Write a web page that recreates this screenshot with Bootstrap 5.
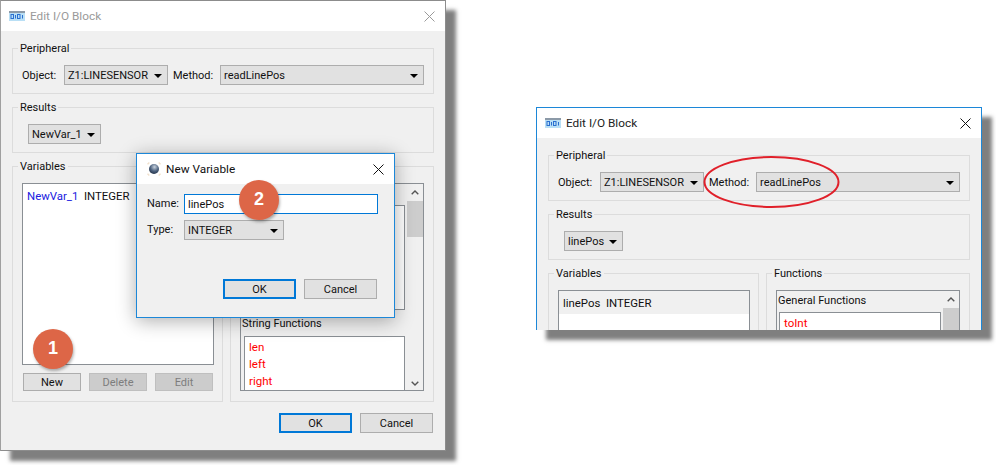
<!doctype html>
<html lang="en">
<head>
<meta charset="utf-8">
<title>Edit I/O Block</title>
<link href="https://cdn.jsdelivr.net/npm/bootstrap@5.3.0/dist/css/bootstrap.min.css" rel="stylesheet">
<style>
html,body{margin:0;background:#fff}
body{font-family:Roboto,"Noto Sans",sans-serif;font-size:11px;line-height:14px;color:#111}
.stage{position:relative;width:996px;height:465px;overflow:hidden}
.win{position:absolute;background:#f0f0f0;box-shadow:10px 10px 4px #7f7f7f;overflow:hidden}
.win-a{left:0;top:0;width:446px;height:451px;border:1px solid #8c8c8c;border-left-color:#a0a0a0}
.win-b{left:536px;top:107px;width:446px;height:223px;border:1px solid #1c87d8;border-bottom:0}
.tbar{height:30px;background:#fff;padding-left:8px;padding-right:10px;font-size:11.8px}
.win-a .tbar-text{color:#9a9a9a}
.tbar-text{margin-left:5px;color:#222}
.x-ico{display:block}
.wbody{padding:10px 11px 0 11px}
.gb{border:1px solid #dcdcdc;padding:0 9px;min-width:0;margin:0 0 6px}
.gb-title{float:none;width:auto;font-size:11px;line-height:12px;margin:0 0 0 -4px;padding:2px 2px 0;color:#111}
.gb-top{padding-top:10px;padding-bottom:8px}
.pick{height:20px;background:#e1e1e1;border:1px solid #adadad;padding:1px 5px 0 3px;line-height:17px;white-space:nowrap}
.pick::after{content:"";border-style:solid;border-width:4px 4px 0;border-color:#000 transparent transparent;margin-left:auto;flex:none}
.lbl{height:20px;line-height:21px;white-space:nowrap}
.lbl-obj{width:42px}
.lbl-met{width:47px;margin-left:5px}
.w-obj{width:104px}
.w-met{width:204px}
.w-res{width:73px;margin-left:6px}
.w-res-b{width:59px}
.fcols{gap:7px}
.gb-v{width:211px;padding:10px 8px 10px 9px;margin-bottom:0}
.gb-f{width:204px;padding:10px 9px 10px;margin-bottom:0}
.vlist{height:182px;background:#fff;border:1px solid #8a8f94}
.vrow{height:23px;padding:5px 4px;white-space:pre;font-size:11.4px}
.win-b .vrow{background:#f0f0f0}
.vname{color:#2020e0}
.win-b .vname{color:#111}
.btn.win-btn{width:58px;height:18px;padding:0;border-radius:0;background:#e1e1e1;border:1px solid #adadad;font-size:11px;line-height:15px;color:#111;opacity:1}
.btn.win-btn:disabled{background:#ccc;border-color:#bfbfbf;color:#7d7d7d;opacity:1}
.vbtns{margin:8px 1px 0;justify-content:space-between}
.fbox{height:208px;border:1px solid #8a8f94;background:#f0f0f0}
.fmain{width:166px;padding:0 2px;overflow:hidden;flex:none}
.fhead{height:21px;padding-top:3px;white-space:nowrap;margin-left:-1px}
.flist{background:#fff;border:1px solid #8a8f94;padding:2px 4px;color:#f00;font-size:11.5px;line-height:17px}
.fl1{height:105px}
.fl2{height:60px;margin-left:1px}
.fgap{height:26px;padding-top:7px;white-space:nowrap;margin-left:-1px}
.sbar{width:16px;flex:none;position:relative}
.sthumb{height:36px;background:#cdcdcd;margin-top:17px}
.schev{display:block;position:absolute;left:4px}
.schev-u{top:6px}
.schev-d{bottom:4px}
.foot{margin-top:11px;padding-right:1px;gap:8px}
.btn.btn-lg-w{width:73px;height:20px;line-height:17px}
.btn.btn-def{border:2px solid #0078d7;line-height:15px}
.dlg{position:absolute;left:136px;top:153px;width:259px;height:165px;background:#f0f0f0;border:1px solid #1c87d8;box-shadow:0 3px 18px rgba(0,0,0,.32)}
.dlg .tbar{padding-left:10px;height:30px}
.dlg .tbar-text{color:#111;margin-left:5px}
.dbody{padding:10px 16px 18px 10px;height:133px}
.row-name{margin-bottom:6px}
.dlbl{width:37px;line-height:20px}
.dinput{width:194px;height:20px;border:1px solid #0078d7;background:#fff;padding:1px 3px 0;line-height:17px}
.w-typ{width:100px}
.mark-num{position:absolute;width:40px;height:40px;border-radius:50%;background:#dd6647;color:#fff;font-weight:700;font-size:18px;line-height:38px;text-align:center;font-family:"Liberation Sans",sans-serif;box-shadow:1px 2px 3px rgba(0,0,0,.3)}
.m1{left:33px;top:329px}
.m2{left:239px;top:180px}
.ring{position:absolute;left:703px;top:155px}
</style>
</head>
<body>
<div class="stage">

<div class="win win-a">
  <div class="tbar d-flex align-items-center">
    <svg width="16" height="10" viewBox="0 0 16 10"><rect width="16" height="10" fill="#b9dff5"/><rect width="16" height="2" fill="#8c9aa8"/><rect x="2" y="3.5" width="2.5" height="4" fill="none" stroke="#2a6fd0"/><rect x="6" y="4" width="1" height="3.5" fill="#2a6fd0"/><rect x="8.5" y="3.5" width="2.5" height="4" fill="none" stroke="#2a6fd0"/><rect x="13" y="4" width="1" height="3.5" fill="#2a6fd0"/></svg>
    <span class="tbar-text">Edit I/O Block</span>
    <svg class="x-ico ms-auto" width="11" height="11" viewBox="0 0 11 11"><path d="M.5.5l10 10M10.5.5l-10 10" stroke="#9a9a9a" fill="none"/></svg>
  </div>
  <div class="wbody">
    <fieldset class="gb">
      <legend class="gb-title">Peripheral</legend>
      <div class="d-flex gb-top">
        <span class="lbl lbl-obj">Object:</span>
        <div class="pick d-flex align-items-center w-obj">Z1:LINESENSOR</div>
        <span class="lbl lbl-met">Method:</span>
        <div class="pick d-flex align-items-center w-met">readLinePos</div>
      </div>
    </fieldset>
    <fieldset class="gb">
      <legend class="gb-title">Results</legend>
      <div class="d-flex gb-top">
        <div class="pick d-flex align-items-center w-res">NewVar_1</div>
      </div>
    </fieldset>
    <div class="d-flex fcols">
      <fieldset class="gb gb-v">
        <legend class="gb-title">Variables</legend>
        <div class="vlist mt-0"><div class="vrow"><span class="vname">NewVar_1</span>  INTEGER</div></div>
        <div class="d-flex vbtns">
          <button class="btn win-btn">New</button>
          <button class="btn win-btn" disabled>Delete</button>
          <button class="btn win-btn" disabled>Edit</button>
        </div>
      </fieldset>
      <fieldset class="gb gb-f">
        <legend class="gb-title">Functions</legend>
        <div class="fbox d-flex">
          <div class="fmain">
            <div class="fhead">General Functions</div>
            <div class="flist fl1">toInt<br>toFloat<br>toStr</div>
            <div class="fgap">String Functions</div>
            <div class="flist fl2">len<br>left<br>right</div>
          </div>
          <div class="sbar">
            <svg class="schev schev-u" width="8" height="5" viewBox="0 0 8 5"><path d="M.7 4.3L4 1l3.3 3.3" fill="none" stroke="#555" stroke-width="1.4"/></svg>
            <div class="sthumb"></div>
            <svg class="schev schev-d" width="8" height="5" viewBox="0 0 8 5"><path d="M.7.7L4 4 7.3.7" fill="none" stroke="#555" stroke-width="1.4"/></svg>
          </div>
        </div>
      </fieldset>
    </div>
    <div class="d-flex justify-content-end foot">
      <button class="btn win-btn btn-lg-w btn-def">OK</button>
      <button class="btn win-btn btn-lg-w">Cancel</button>
    </div>
  </div>
</div>

<div class="win win-b">
  <div class="tbar d-flex align-items-center">
    <svg width="16" height="10" viewBox="0 0 16 10"><rect width="16" height="10" fill="#b9dff5"/><rect width="16" height="2" fill="#8c9aa8"/><rect x="2" y="3.5" width="2.5" height="4" fill="none" stroke="#2a6fd0"/><rect x="6" y="4" width="1" height="3.5" fill="#2a6fd0"/><rect x="8.5" y="3.5" width="2.5" height="4" fill="none" stroke="#2a6fd0"/><rect x="13" y="4" width="1" height="3.5" fill="#2a6fd0"/></svg>
    <span class="tbar-text">Edit I/O Block</span>
    <svg class="x-ico ms-auto" width="11" height="11" viewBox="0 0 11 11"><path d="M.5.5l10 10M10.5.5l-10 10" stroke="#111" fill="none"/></svg>
  </div>
  <div class="wbody">
    <fieldset class="gb">
      <legend class="gb-title">Peripheral</legend>
      <div class="d-flex gb-top">
        <span class="lbl lbl-obj">Object:</span>
        <div class="pick d-flex align-items-center w-obj">Z1:LINESENSOR</div>
        <span class="lbl lbl-met">Method:</span>
        <div class="pick d-flex align-items-center w-met">readLinePos</div>
      </div>
    </fieldset>
    <fieldset class="gb">
      <legend class="gb-title">Results</legend>
      <div class="d-flex gb-top">
        <div class="pick d-flex align-items-center w-res w-res-b">linePos</div>
      </div>
    </fieldset>
    <div class="d-flex fcols">
      <fieldset class="gb gb-v">
        <legend class="gb-title">Variables</legend>
        <div class="vlist"><div class="vrow">linePos  INTEGER</div></div>
      </fieldset>
      <fieldset class="gb gb-f">
        <legend class="gb-title">Functions</legend>
        <div class="fbox d-flex">
          <div class="fmain">
            <div class="fhead">General Functions</div>
            <div class="flist fl1">toInt</div>
          </div>
          <div class="sbar">
            <svg class="schev schev-u" width="8" height="5" viewBox="0 0 8 5"><path d="M.7 4.3L4 1l3.3 3.3" fill="none" stroke="#555" stroke-width="1.4"/></svg>
            <div class="sthumb"></div>
          </div>
        </div>
      </fieldset>
    </div>
  </div>
</div>

<div class="dlg">
  <div class="tbar d-flex align-items-center">
    <svg width="14" height="14" viewBox="0 0 14 14"><defs><radialGradient id="g" cx=".55" cy=".3" r=".75"><stop offset="0" stop-color="#c9d3de"/><stop offset=".55" stop-color="#4d627f"/><stop offset="1" stop-color="#1f2e44"/></radialGradient></defs><circle cx="7" cy="7" r="5" fill="url(#g)"/><path d="M1 1h1.5M1 1v1.5M13 1h-1.5M13 1v1.5M1 13h1.5M1 13v-1.5M13 13h-1.5M13 13v-1.5" stroke="#ecd7bc" fill="none"/></svg>
    <span class="tbar-text">New Variable</span>
    <svg class="x-ico ms-auto" width="11" height="11" viewBox="0 0 11 11"><path d="M.5.5l10 10M10.5.5l-10 10" stroke="#111" fill="none"/></svg>
  </div>
  <div class="dbody d-flex flex-column">
    <div class="d-flex row-name"><span class="dlbl">Name:</span><div class="dinput">linePos</div></div>
    <div class="d-flex"><span class="dlbl">Type:</span><div class="pick d-flex align-items-center w-typ">INTEGER</div></div>
    <div class="d-flex justify-content-end mt-auto foot">
      <button class="btn win-btn btn-lg-w btn-def">OK</button>
      <button class="btn win-btn btn-lg-w">Cancel</button>
    </div>
  </div>
</div>

<div class="mark-num m1">1</div>
<div class="mark-num m2">2</div>

<svg class="ring" width="138" height="54" viewBox="0 0 138 54"><ellipse cx="68.5" cy="27" rx="67" ry="25" fill="none" stroke="#e0202a" stroke-width="2"/></svg>

</div>
<script src="https://cdn.jsdelivr.net/npm/bootstrap@5.3.0/dist/js/bootstrap.bundle.min.js"></script>
</body>
</html>
